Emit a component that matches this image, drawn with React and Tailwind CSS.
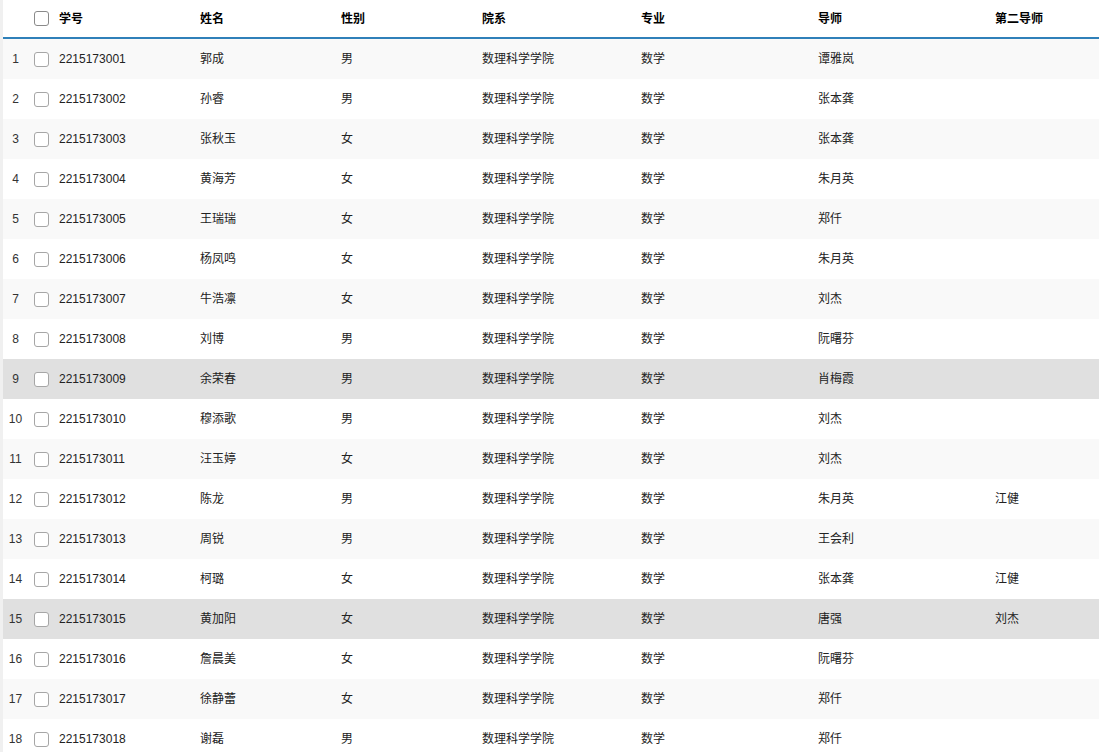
const rows = [
  ['2215173001', '郭成', '男', '谭雅岚', ''],
  ['2215173002', '孙睿', '男', '张本龚', ''],
  ['2215173003', '张秋玉', '女', '张本龚', ''],
  ['2215173004', '黄海芳', '女', '朱月英', ''],
  ['2215173005', '王瑞瑞', '女', '郑仟', ''],
  ['2215173006', '杨凤鸣', '女', '朱月英', ''],
  ['2215173007', '牛浩凛', '女', '刘杰', ''],
  ['2215173008', '刘博', '男', '阮曙芬', ''],
  ['2215173009', '余荣春', '男', '肖梅霞', ''],
  ['2215173010', '穆添歌', '男', '刘杰', ''],
  ['2215173011', '汪玉婷', '女', '刘杰', ''],
  ['2215173012', '陈龙', '男', '朱月英', '江健'],
  ['2215173013', '周锐', '男', '王会利', ''],
  ['2215173014', '柯璐', '女', '张本龚', '江健'],
  ['2215173015', '黄加阳', '女', '唐强', '刘杰'],
  ['2215173016', '詹晨美', '女', '阮曙芬', ''],
  ['2215173017', '徐静蕾', '女', '郑仟', ''],
  ['2215173018', '谢磊', '男', '郑仟', ''],
];

const highlighted = [9, 15];

const cols = 'grid grid-cols-[25px_31px_141px_141px_141px_159px_177px_177px_1fr] items-center';

function Box({ dark }) {
  return (
    <span
      className={`block w-[15px] h-[15px] rounded-[3px] border-[1.5px] bg-white ${dark ? 'border-[#8a8a8a]' : 'border-[#a6a6a6]'}`}
    />
  );
}

export default function App() {
  return (
    <div
      className="flex h-[752px] overflow-hidden bg-white text-[12px] text-[#222]"
      style={{ fontFamily: '"Liberation Sans", Arial, "Noto Sans CJK SC", sans-serif' }}
    >
      <div className="w-[3px] shrink-0 bg-[#f0f0f0]" />
      <div className="flex-1">
        <div className={`${cols} h-[39px] border-b-2 border-[#2f80b9] font-bold text-black`}>
          <span />
          <span className="pl-[6px]"><Box dark /></span>
          <span>学号</span>
          <span>姓名</span>
          <span>性别</span>
          <span>院系</span>
          <span>专业</span>
          <span>导师</span>
          <span>第二导师</span>
        </div>
        {rows.map((r, i) => {
          const n = i + 1;
          const bg = highlighted.includes(n) ? 'bg-[#e0e0e0]' : n % 2 === 1 ? 'bg-[#f9f9f9]' : 'bg-white';
          return (
            <div key={n} className={`${cols} h-[40px] ${bg}`}>
              <span className="text-center text-[#333]">{n}</span>
              <span className="pl-[6px]"><Box /></span>
              <span>{r[0]}</span>
              <span>{r[1]}</span>
              <span>{r[2]}</span>
              <span>数理科学学院</span>
              <span>数学</span>
              <span>{r[3]}</span>
              <span>{r[4]}</span>
            </div>
          );
        })}
      </div>
    </div>
  );
}
